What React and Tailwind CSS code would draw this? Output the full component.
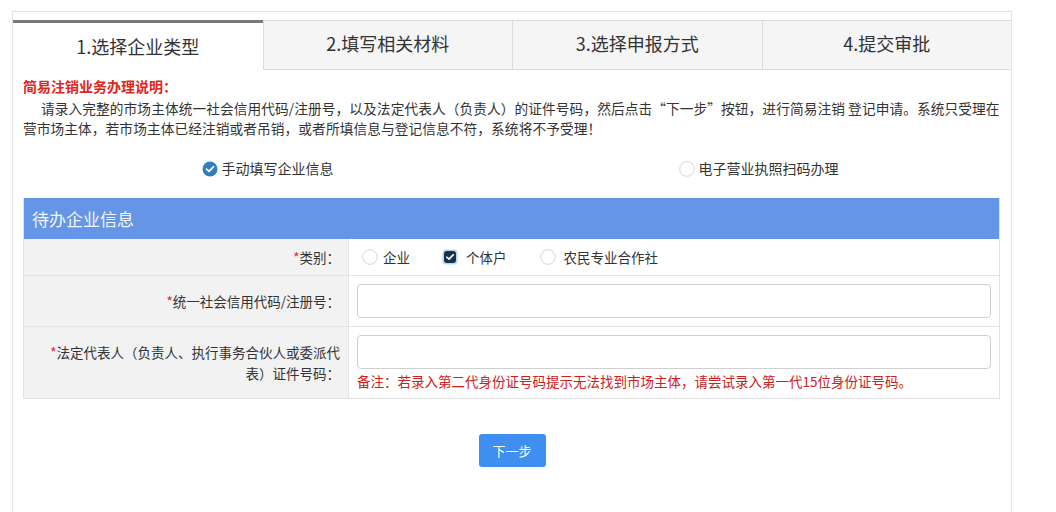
import React from "react";

const font = { fontFamily: '"Noto Sans CJK SC", "Microsoft YaHei", sans-serif' };

function CheckedRadio() {
  return (
    <svg width="16" height="16" viewBox="0 0 16 16" className="shrink-0">
      <circle cx="8" cy="8" r="7.5" fill="#2f7fc0" />
      <path d="M4.6 8.2 L7 10.4 L11.4 5.8" fill="none" stroke="#fff" strokeWidth="1.8" strokeLinecap="round" strokeLinejoin="round" />
    </svg>
  );
}

function EmptyRadio() {
  return (
    <svg width="16" height="16" viewBox="0 0 16 16" className="shrink-0">
      <circle cx="8" cy="8" r="7.3" fill="#fff" stroke="#d6d6d6" strokeWidth="1" />
    </svg>
  );
}

function CheckedBox() {
  return (
    <svg width="16" height="16" viewBox="0 0 16 16" className="shrink-0">
      <rect x="0.5" y="0.5" width="15" height="15" rx="4" fill="#bcd3ea" />
      <rect x="2" y="2" width="12" height="12" rx="3" fill="#17324d" />
      <path d="M4.8 8.2 L7 10.2 L11.2 5.9" fill="none" stroke="#fff" strokeWidth="1.7" strokeLinecap="round" strokeLinejoin="round" />
    </svg>
  );
}

export default function App() {
  const tabs = ["1.选择企业类型", "2.填写相关材料", "3.选择申报方式", "4.提交审批"];
  return (
    <div className="w-[1056px] h-[512px] overflow-hidden bg-white text-[#333]" style={font}>
      <div className="ml-[12px] mt-[11px] w-[1000px] h-[520px] border border-[#e3e3e3] pt-[8px]">
        <div className="grid grid-cols-4 h-[50px]">
          {tabs.map((t, i) =>
            i === 0 ? (
              <div key={t} className="flex items-center justify-center bg-white border-t-[3px] border-[#7a7a7a] text-[18px] text-[#333] pb-[1px]">
                {t}
              </div>
            ) : (
              <div key={t} className="flex items-center justify-center bg-[#f5f5f5] border-t border-b border-l border-[#dcdcdc] text-[18px] text-[#333] pb-[3px]">
                {t}
              </div>
            )
          )}
        </div>
        <div className="px-[10px] pt-[6px]">
          <div className="text-[14px] font-bold text-[#e1251b] leading-[20px]">简易注销业务办理说明：</div>
          <div className="text-[13.7px] leading-[20px] text-[#333] mt-[2px] tracking-[0.08px]">
            <div className="whitespace-nowrap pl-[18px]">
              请录入完整的市场主体统一社会信用代码/注册号，以及法定代表人（负责人）的证件号码，然后点击“下一步”按钮，进行简易注销 登记申请。系统只受理在
            </div>
            <div className="whitespace-nowrap">
              营市场主体，若市场主体已经注销或者吊销，或者所填信息与登记信息不符，系统将不予受理！
            </div>
          </div>
          <div className="grid grid-cols-2 mt-[20px] h-[20px] text-[14px]">
            <div className="flex items-center justify-center gap-[4px]">
              <CheckedRadio />
              <span>手动填写企业信息</span>
            </div>
            <div className="flex items-center justify-center gap-[4px] pl-[4px]">
              <EmptyRadio />
              <span>电子营业执照扫码办理</span>
            </div>
          </div>
          <div className="mt-[20px] w-[977px] border border-[#e2e2e2] border-t-0">
            <div className="h-[41px] bg-[#6495e6] flex items-center pl-[8px] text-[17px] text-[#f3f6fd]">待办企业信息</div>
            <div className="grid grid-cols-[325px_1fr] h-[37px] border-b border-[#e4e4e4]">
              <div className="bg-[#f2f2f2] flex items-center justify-end pr-[8px] text-[13.5px] border-r border-[#e4e4e4]">
                <span className="text-[#e1251b]">*</span>类别：
              </div>
              <div className="flex items-center pl-[13px] text-[13.5px]">
                <EmptyRadio />
                <span className="ml-[5px]">企业</span>
                <span className="ml-[32px]"><CheckedBox /></span>
                <span className="ml-[8px]">个体户</span>
                <span className="ml-[33px]"><EmptyRadio /></span>
                <span className="ml-[8px]">农民专业合作社</span>
              </div>
            </div>
            <div className="grid grid-cols-[325px_1fr] h-[51px] border-b border-[#e4e4e4]">
              <div className="bg-[#f2f2f2] flex items-center justify-end pr-[8px] text-[13.5px] border-r border-[#e4e4e4]">
                <span className="text-[#e1251b]">*</span>统一社会信用代码/注册号：
              </div>
              <div className="flex items-center pl-[8px] pr-[8px]">
                <div className="w-full h-[34px] border border-[#cfcfcf] rounded-[4px] bg-white"></div>
              </div>
            </div>
            <div className="grid grid-cols-[325px_1fr] h-[71px]">
              <div className="bg-[#f2f2f2] flex items-center justify-end pl-[12px] pr-[8px] text-[13.5px] leading-[21px] text-right border-r border-[#e4e4e4]">
                <div>
                  <span className="text-[#e1251b]">*</span>法定代表人（负责人、执行事务合伙人或委派代<br />表）证件号码：
                </div>
              </div>
              <div className="flex flex-col pl-[8px] pr-[8px] pt-[8px]">
                <div className="w-full h-[34px] border border-[#cfcfcf] rounded-[4px] bg-white"></div>
                <div className="text-[13.5px] text-[#d0201b] leading-[18px] mt-[3px]">
                  备注：若录入第二代身份证号码提示无法找到市场主体，请尝试录入第一代15位身份证号码。
                </div>
              </div>
            </div>
          </div>
          <div className="flex justify-center mt-[35px]">
            <div className="w-[67px] h-[33px] rounded-[3px] bg-[#3f8ff0] text-white text-[13px] flex items-center justify-center">下一步</div>
          </div>
        </div>
      </div>
    </div>
  );
}
